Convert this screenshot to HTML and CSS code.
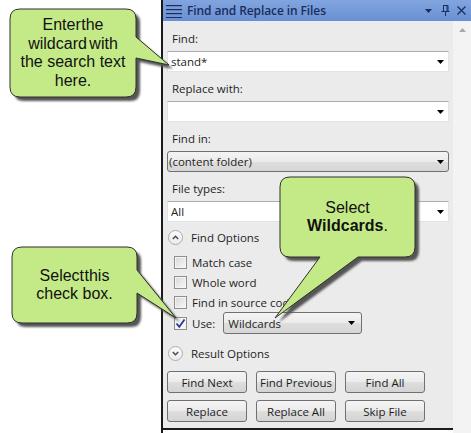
FILE: index.html
```html
<!DOCTYPE html>
<html>
<head>
<meta charset="utf-8">
<link rel="stylesheet" href="styles.css">
</head>
<body>
<div class="page">
  <div class="panel">
    <div class="titlebar">
      <svg class="hamb" width="16" height="14" viewBox="0 0 16 14"><rect x="0" y="1" width="16" height="1.2"/><rect x="0" y="5" width="16" height="1.2"/><rect x="0" y="9" width="16" height="1.2"/><rect x="0" y="13" width="16" height="1"/></svg>
      <span class="title">Find and Replace in Files</span>
      <svg class="tb-tri" width="7" height="4" viewBox="0 0 7 4"><path d="M0 0H7L3.5 4Z"/></svg>
      <svg class="tb-pin" width="9" height="11" viewBox="0 0 9 11"><path d="M2 0.5H7M2.5 0.5V6M6 0.5V6M7 0.5V6M0.5 6.5H8.5M4.5 6.5V11" fill="none" stroke="#1b2d5a" stroke-width="1"/></svg>
      <svg class="tb-x" width="9" height="9" viewBox="0 0 9 9"><path d="M0.5 0.5L8.5 8.5M8.5 0.5L0.5 8.5" stroke="#1b2d5a" stroke-width="1.3"/></svg>
    </div>
    <div class="main">
      <div class="content">
        <div class="grp">
          <div class="lbl">Find:</div>
          <div class="field"><span>stand*</span><svg class="arr" width="7" height="4" viewBox="0 0 7 4"><path d="M0 0H7L3.5 4Z"/></svg></div>
        </div>
        <div class="grp">
          <div class="lbl">Replace with:</div>
          <div class="field"><span></span><svg class="arr" width="7" height="4" viewBox="0 0 7 4"><path d="M0 0H7L3.5 4Z"/></svg></div>
        </div>
        <div class="grp">
          <div class="lbl">Find in:</div>
          <div class="field combo"><span>(content folder)</span><svg class="arr" width="7" height="4" viewBox="0 0 7 4"><path d="M0 0H7L3.5 4Z"/></svg></div>
        </div>
        <div class="grp">
          <div class="lbl">File types:</div>
          <div class="field"><span>All</span><svg class="arr" width="7" height="4" viewBox="0 0 7 4"><path d="M0 0H7L3.5 4Z"/></svg></div>
        </div>
        <div class="opt-head first">
          <span class="circ"><svg width="7" height="5" viewBox="0 0 7 5"><path d="M0.8 4L3.5 1.3L6.2 4" fill="none" stroke="#4a4a4a" stroke-width="1.5"/></svg></span>
          <span>Find Options</span>
        </div>
        <div class="chk-row top"><span class="chk"></span><span>Match case</span></div>
        <div class="chk-row"><span class="chk"></span><span>Whole word</span></div>
        <div class="chk-row"><span class="chk"></span><span>Find in source code</span></div>
        <div class="chk-row use">
          <span class="chk checked"><svg width="11" height="11" viewBox="0 0 11 11"><path d="M1.5 5.5L4.3 8.8L9.5 1.5" fill="none" stroke="#26398f" stroke-width="1.8"/></svg></span>
          <span>Use:</span>
          <div class="dd"><span>Wildcards</span><svg class="arr" width="7" height="4" viewBox="0 0 7 4"><path d="M0 0H7L3.5 4Z"/></svg></div>
        </div>
        <div class="opt-head result">
          <span class="circ"><svg width="7" height="5" viewBox="0 0 7 5"><path d="M0.8 1L3.5 3.7L6.2 1" fill="none" stroke="#4a4a4a" stroke-width="1.5"/></svg></span>
          <span>Result Options</span>
        </div>
        <div class="btn-row r1">
          <div class="btn">Find Next</div>
          <div class="btn">Find Previous</div>
          <div class="btn">Find All</div>
        </div>
        <div class="btn-row r2">
          <div class="btn">Replace</div>
          <div class="btn">Replace All</div>
          <div class="btn">Skip File</div>
        </div>
      </div>
      <div class="scrollbar">
        <svg class="sb-up" width="7" height="4" viewBox="0 0 7 4"><path d="M0 4H7L3.5 0Z"/></svg>
      </div>
    </div>
  </div>

  <svg class="callouts" width="471" height="433" viewBox="0 0 471 433">
    <defs>
      <filter id="soft" x="-10%" y="-10%" width="130%" height="130%"><feGaussianBlur stdDeviation="0.9"/></filter>
    </defs>
    <g class="shadow" transform="translate(4,4)" filter="url(#soft)">
      <path d="M20,9 H126 Q136,9 136,19 V37 L169,65 L136,58 V87 Q136,97 126,97 H20 Q10,97 10,87 V19 Q10,9 20,9 Z"/>
      <path d="M22,247 H127 Q137,247 137,257 V270 L176,318 L137,293 V313 Q137,323 127,323 H22 Q12,323 12,313 V257 Q12,247 22,247 Z"/>
      <path d="M290,177 H405 Q415,177 415,187 V247 Q415,257 405,257 H358 L275,318 L320,257 H290 Q280,257 280,247 V187 Q280,177 290,177 Z"/>
    </g>
    <g class="bubble">
      <path d="M20,9 H126 Q136,9 136,19 V37 L169,65 L136,58 V87 Q136,97 126,97 H20 Q10,97 10,87 V19 Q10,9 20,9 Z"/>
      <path d="M22,247 H127 Q137,247 137,257 V270 L176,318 L137,293 V313 Q137,323 127,323 H22 Q12,323 12,313 V257 Q12,247 22,247 Z"/>
      <path d="M290,177 H405 Q415,177 415,187 V247 Q415,257 405,257 H358 L275,318 L320,257 H290 Q280,257 280,247 V187 Q280,177 290,177 Z"/>
    </g>
  </svg>
  <div class="ctext c1"><div><span class="t4">Enter the</span><br><span class="t2">wildcard with</span><br>the search text<br>here.</div></div>
  <div class="ctext c2"><div><span class="t4">Select this</span><br>check box.</div></div>
  <div class="ctext c3"><div>Select<br><b>Wildcards</b>.</div></div>
</div>
</body>
</html>
```
FILE: styles.css
```css
html, body {
  margin: 0;
  padding: 0;
  background: #ffffff;
}
.page {
  position: relative;
  width: 471px;
  height: 433px;
  box-sizing: border-box;
  padding-left: 161px;
  overflow: hidden;
  font-family: "Open Sans", "Noto Sans", sans-serif;
  font-size: 11.5px;
  color: #1e1e1e;
}
.panel {
  width: 310px;
  height: 433px;
  box-sizing: border-box;
  border-left: 2px solid #1a1a1a;
  display: flex;
  flex-direction: column;
}
.titlebar {
  height: 21px;
  flex: none;
  display: flex;
  align-items: center;
  padding-left: 3px;
  background: linear-gradient(#82a5df, #6990d4);
  color: #1b2d5a;
}
.hamb { fill: #1b2d5a; flex: none; }
.title {
  flex: 1;
  margin-left: 5px;
  font-weight: 600;
  font-size: 12px;
  letter-spacing: -0.1px;
  line-height: 21px;
}
.tb-tri { fill: #1b2d5a; margin-right: 9px; margin-top: 1px; }
.tb-pin { margin-right: 7px; }
.tb-x { margin-right: 5px; }
.main {
  flex: 1;
  display: flex;
}
.content {
  width: 290px;
  height: 409px;
  box-sizing: border-box;
  padding: 9px 4px 0;
  background: #ebebeb;
  border-bottom: 2px solid #1a1a1a;
  display: flex;
  flex-direction: column;
}
.scrollbar {
  flex: 1;
  background: #f3f3f3;
  display: flex;
  justify-content: center;
  padding-top: 7px;
  align-items: flex-start;
}
.sb-up { fill: #a8a8a8; }
.grp + .grp { margin-top: 8px; }
.lbl {
  height: 18px;
  line-height: 18px;
  padding-left: 5px;
  margin-bottom: 3px;
}
.field {
  height: 21px;
  box-sizing: border-box;
  background: #ffffff;
  border: 1px solid #e2e3e5;
  border-top-color: #abadb3;
  display: flex;
  align-items: center;
  justify-content: space-between;
  padding: 0 4px 0 3px;
}
.field.combo {
  border: 1px solid #707070;
  border-radius: 3px;
  background: linear-gradient(#f4f4f4, #ebebeb 50%, #dedede 51%, #d6d6d6);
  padding-left: 1px;
}
.arr { fill: #000000; flex: none; }
.opt-head {
  height: 20px;
  display: flex;
  align-items: center;
  gap: 8px;
  padding-left: 1px;
}
.opt-head.first { margin-top: 5px; }
.opt-head.result { margin-top: 9px; }
.circ {
  width: 15px;
  height: 15px;
  box-sizing: border-box;
  border-radius: 50%;
  border: 1px solid #aeaeae;
  background: linear-gradient(#fafafa, #ececec);
  display: flex;
  align-items: center;
  justify-content: center;
}
.chk-row {
  height: 20px;
  display: flex;
  align-items: center;
  padding-left: 7px;
  gap: 5px;
}
.chk-row.top { margin-top: 5px; }
.chk-row.use { height: 22px; }
.chk {
  width: 13px;
  height: 13px;
  box-sizing: border-box;
  border: 1px solid #8e8f8f;
  background: linear-gradient(135deg, #d9d9d9, #f7f7f7);
  box-shadow: inset 0 0 0 1px #f4f4f4;
  display: flex;
  align-items: center;
  justify-content: center;
  flex: none;
}
.chk.checked { background: #f4f4f4; }
.dd {
  margin-left: 3px;
  width: 139px;
  height: 22px;
  box-sizing: border-box;
  border: 1px solid #707070;
  border-radius: 3px;
  background: linear-gradient(#f4f4f4, #ebebeb 50%, #dedede 51%, #d6d6d6);
  display: flex;
  align-items: center;
  justify-content: space-between;
  padding: 0 6px 0 4px;
}
.btn-row {
  display: flex;
  gap: 9px;
}
.btn-row.r1 { margin-top: 8px; }
.btn-row.r2 { margin-top: 7px; }
.btn {
  width: 80px;
  height: 22px;
  box-sizing: border-box;
  border: 1px solid #707070;
  border-radius: 3px;
  background: linear-gradient(#f4f4f4, #ebebeb 50%, #dedede 51%, #d4d4d4);
  display: flex;
  align-items: center;
  justify-content: center;
  white-space: nowrap;
}
.callouts {
  position: absolute;
  left: 0;
  top: 0;
  pointer-events: none;
}
.shadow path { fill: #555555; }
.bubble path { fill: #c4ea88; stroke: #2e2e2e; stroke-width: 1; }
.ctext {
  position: absolute;
  display: flex;
  align-items: center;
  justify-content: center;
  text-align: center;
  font-family: "Liberation Sans", Arial, sans-serif;
  font-size: 16px;
  line-height: 18.5px;
  color: #111111;
}
.ctext .t4 { word-spacing: -4px; }
.ctext .t2 { word-spacing: -2px; }
.c1 { left: 10px; top: 9px; width: 126px; height: 88px; }
.c2 { left: 12px; top: 247px; width: 125px; height: 76px; }
.c3 { left: 280px; top: 177px; width: 135px; height: 80px; }
```
